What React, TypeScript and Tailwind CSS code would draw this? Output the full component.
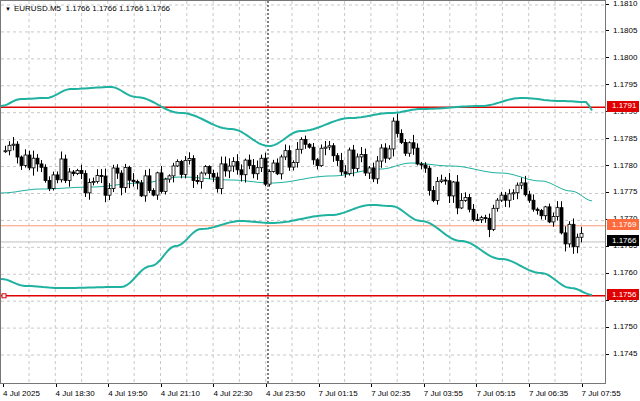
import React from "react";

const W = 604, H = 384;
const py = (p: number) => 4 + (1.181 - p) * 10000 * 5.385;

function interp(pts: number[][], x: number) {
  for (let i = 0; i < pts.length - 1; i++) {
    if (x >= pts[i][0] && x <= pts[i + 1][0]) {
      const t = (x - pts[i][0]) / (pts[i + 1][0] - pts[i][0]);
      const s = (1 - Math.cos(t * Math.PI)) / 2;
      return pts[i][1] + s * (pts[i + 1][1] - pts[i][1]);
    }
  }
  return pts[pts.length - 1][1];
}

const upper = [[0,105],[20,98],[45,97],[70,88],[110,86],[135,96],[180,112],[230,128],[268,145],[300,130],[350,117],[390,112],[420,108],[480,105],[520,97],[560,100],[585,101],[592,110]];
const lower = [[0,278],[25,285],[60,287],[120,286],[150,265],[175,245],[200,228],[240,220],[270,222],[330,214],[370,204],[390,205],[420,220],[460,240],[500,258],[540,272],[570,287],[592,294]];
const mid = [[0,192],[40,188],[90,186],[140,182],[180,176],[230,179],[270,182],[330,175],[380,168],[410,162],[450,165],[500,172],[540,180],[570,190],[592,200]];
const pricePath = [[4,150],[20,160],[40,175],[70,168],[90,182],[120,180],[150,185],[180,170],[210,178],[240,160],[262,170],[275,160],[300,150],[340,160],[375,165],[385,150],[395,125],[410,150],[420,165],[432,195],[450,190],[470,205],[485,230],[500,205],[515,185],[530,200],[550,215],[565,230],[582,242]];

function rng(seed: number) {
  let s = seed;
  return () => { s = (s * 9301 + 49297) % 233280; return s / 233280; };
}

const candles = (() => {
  const r = rng(7);
  const out: { x: number; o: number; c: number; h: number; l: number }[] = [];
  let prev = interp(pricePath, 4);
  for (let x = 4; x <= 582; x += 4) {
    const base = interp(pricePath, x);
    const c = base + (r() - 0.5) * 28;
    const o = prev;
    const h = Math.min(o, c) - r() * 7 - 1;
    const l = Math.max(o, c) + r() * 7 + 1;
    out.push({ x, o, c, h, l });
    prev = c;
  }
  return out;
})();

const line = (pts: number[][]) => {
  const a: string[] = [];
  for (let x = 0; x <= 592; x += 3) a.push(`${x},${interp(pts, x).toFixed(1)}`);
  return a.join(" ");
};

const ticks = [1.181,1.1805,1.18,1.1795,1.179,1.1785,1.178,1.1775,1.177,1.1765,1.176,1.1755,1.175,1.1745];
const times = ["4 Jul 2025","4 Jul 18:30","4 Jul 19:50","4 Jul 21:10","4 Jul 22:30","4 Jul 23:50","7 Jul 01:15","7 Jul 02:35","7 Jul 03:55","7 Jul 05:15","7 Jul 06:35","7 Jul 07:55"];

export default function App() {
  const font = { fontFamily: "'Liberation Sans', Arial, sans-serif" };
  return (
    <div className="w-[640px] h-[401px] bg-white flex flex-col overflow-hidden text-[8px] text-black" style={font}>
      <div className="flex h-[384px]">
        <div className="relative w-[606px] h-[384px] border border-[#777]">
          <svg width={W} height={H} className="absolute inset-0">
            {ticks.map((p) => (
              <line key={p} x1={0} x2={W} y1={py(p)} y2={py(p)} stroke="#c8c8c8" strokeDasharray="3 3" />
            ))}
            {Array.from({ length: 24 }).map((_, i) => (
              <line key={i} x1={28 + i * 26.3} x2={28 + i * 26.3} y1={0} y2={H} stroke="#c8c8c8" strokeDasharray="3 3" />
            ))}
            <line x1={267} x2={267} y1={0} y2={H} stroke="#000" strokeDasharray="2 2" />
            <line x1={0} x2={W} y1={py(1.1766)} y2={py(1.1766)} stroke="#c0c0c0" />
            <line x1={0} x2={W} y1={py(1.1769)} y2={py(1.1769)} stroke="#ff9a78" />
            <line x1={0} x2={W} y1={py(1.1791)} y2={py(1.1791)} stroke="#e00000" strokeWidth={1.5} />
            <line x1={0} x2={W} y1={py(1.1756)} y2={py(1.1756)} stroke="#e00000" strokeWidth={1.5} />
            <rect x={1} y={py(1.1756) - 2} width={4} height={4} fill="white" stroke="#e00000" />
            <polyline points={line(upper)} fill="none" stroke="#20b2a0" strokeWidth={2} />
            <polyline points={line(lower)} fill="none" stroke="#20b2a0" strokeWidth={2} />
            <polyline points={line(mid)} fill="none" stroke="#20b2a0" strokeWidth={1} />
            {candles.map((k, i) => {
              const bull = k.c < k.o;
              const top = Math.min(k.o, k.c), bot = Math.max(k.o, k.c);
              return (
                <g key={i}>
                  <line x1={k.x + 0.5} x2={k.x + 0.5} y1={k.h} y2={k.l} stroke="#000" />
                  <rect x={k.x - 1} y={top} width={3} height={Math.max(1, bot - top)} fill={bull ? "#fff" : "#000"} stroke="#000" strokeWidth={0.8} />
                </g>
              );
            })}
          </svg>
          <div className="absolute left-[4px] top-[2px] flex items-center gap-[3px]">
            <span className="text-[6px]">▼</span>
            <span>EURUSD.M5&nbsp;&nbsp;1.1766 1.1766 1.1766 1.1766</span>
          </div>
        </div>
        <div className="relative flex-1">
          {ticks.map((p) => (
            <div key={p} className="absolute left-0 flex items-center" style={{ top: py(p) - 5 }}>
              <span className="w-[3px] h-px bg-black" />
              <span className="ml-[4px] leading-[10px]">{p.toFixed(4)}</span>
            </div>
          ))}
          {[
            [1.1791, "bg-[#e00000]"],
            [1.1769, "bg-[#ff6a3c]"],
            [1.1766, "bg-black"],
            [1.1756, "bg-[#e00000]"],
          ].map(([p, c]) => (
            <div key={String(p)} className={`absolute left-[1px] w-[32px] h-[11px] text-white flex items-center pl-[5px] ${c}`} style={{ top: py(p as number) - 5.5 }}>
              {(p as number).toFixed(4)}
            </div>
          ))}
        </div>
      </div>
      <div className="relative h-[17px]">
        {times.map((t, i) => (
          <div key={t} className="absolute top-0 flex flex-col" style={{ left: 3 + i * 52.6 }}>
            <span className="w-px h-[3px] bg-black" />
            <span className="whitespace-nowrap leading-[11px] mt-[1px]">{t}</span>
          </div>
        ))}
      </div>
    </div>
  );
}
